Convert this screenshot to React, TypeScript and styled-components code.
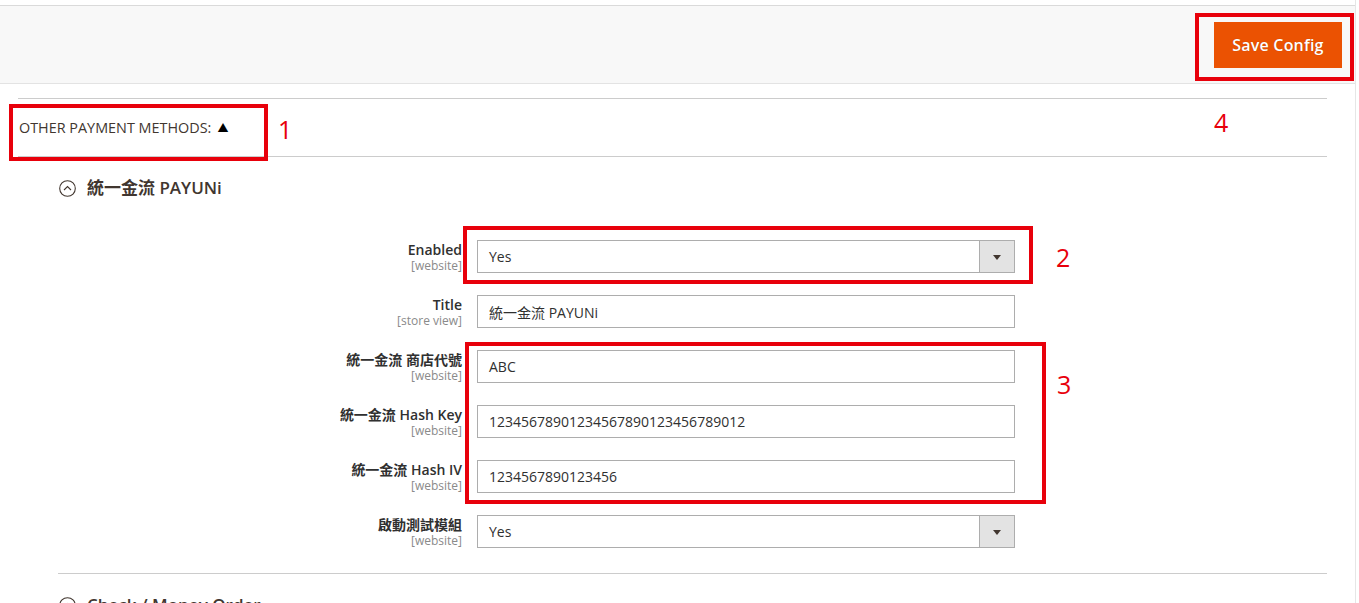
import React from "react";
import styled, { createGlobalStyle } from "styled-components";

const Global = createGlobalStyle`
  html, body { margin: 0; padding: 0; background: #fff; }
  body { font-family: "Open Sans", "Noto Sans CJK TC", sans-serif; color: #303030; overflow: hidden; }
  * { box-sizing: border-box; }
`;

const Page = styled.div`
  width: 1356px;
  height: 603px;
  padding-top: 5px;
  border-right: 1px solid #e6e6e6;
  overflow: hidden;
`;

const Header = styled.header`
  height: 79px;
  background: #f8f8f8;
  border-top: 1px solid #dadada;
  border-bottom: 1px solid #e3e3e3;
  display: flex;
  align-items: flex-start;
  justify-content: flex-end;
  padding: 16px 13px 0 0;
`;

const SaveButton = styled.button`
  display: block;
  width: 128px;
  height: 46px;
  background: #eb5202;
  border: 1px solid #eb5202;
  color: #fff;
  font-family: "Open Sans", sans-serif;
  font-size: 16px;
  font-weight: 600;
  letter-spacing: 0.2px;
  text-shadow: 0 0 1px rgba(0, 0, 0, 0.25);
  padding: 0;
  cursor: pointer;
`;

/* Red annotation: a box drawn over the wrapped element, plus a number beside it */
const Annot = styled.div<{ $inset: string }>`
  position: relative;
  &::after {
    content: "";
    position: absolute;
    inset: ${(p) => p.$inset};
    border: 4px solid #e8000b;
    pointer-events: none;
  }
`;

const AnnotInline = styled(Annot)`
  display: inline-flex;
  align-items: center;
  gap: 6px;
`;

const Num = styled.span<{ $x: number; $y: number }>`
  position: absolute;
  left: ${(p) => p.$x}px;
  top: ${(p) => p.$y}px;
  font-family: "Open Sans", sans-serif;
  font-size: 25px;
  line-height: 30px;
  font-weight: 400;
  text-transform: none;
  color: #e8000b;
`;

const Content = styled.main`
  padding: 14px 0 0 18px;
  width: 1327px;
`;

const Section = styled.section`
  border-top: 1px solid #cccccc;
`;

const SectionHead = styled.div`
  padding: 20px 0 19px 1px;
  font-size: 14.4px;
  line-height: 18px;
  text-transform: uppercase;
  color: #41362f;
  border-bottom: 1px solid #cccccc;
`;

const Caret = styled.span`
  font-size: 11px;
  color: #000;
  line-height: 18px;
`;

const Group = styled.div<{ $last?: boolean }>`
  margin-left: 40px;
  border-bottom: ${(p) => (p.$last ? "none" : "1px solid #cccccc")};
  padding-bottom: ${(p) => (p.$last ? "0" : "25px")};
`;

const GroupHead = styled.div`
  padding-top: 21px;
  display: flex;
  align-items: center;
  gap: 11px;
  font-size: 17px;
  font-weight: 600;
  line-height: 20px;
  color: #41362f;
  padding-left: 1px;
`;

const Form = styled.div`
  margin-top: 42px;
  display: grid;
  grid-template-columns: 404px 538px;
  column-gap: 15px;
  row-gap: 22px;
`;

const Label = styled.div`
  text-align: right;
  display: flex;
  flex-direction: column;
  align-items: flex-end;
`;

const LabelText = styled.span`
  font-size: 14px;
  font-weight: 600;
  line-height: 19px;
  color: #303030;
`;

const Scope = styled.span`
  font-size: 12px;
  line-height: 14px;
  color: #8a8a8a;
`;

const Input = styled.div`
  height: 33px;
  border: 1px solid #adadad;
  background: #fff;
  display: flex;
  align-items: center;
  font-size: 14px;
  color: #303030;
`;

const Value = styled.span`
  flex: 1;
  padding-left: 11px;
  white-space: nowrap;
`;

const ArrowBox = styled.span`
  width: 35px;
  height: 100%;
  background: #e3e3e3;
  border-left: 1px solid #adadad;
  display: flex;
  align-items: center;
  justify-content: center;
`;

const Arrow = styled.span`
  width: 0;
  height: 0;
  border-left: 4px solid transparent;
  border-right: 4px solid transparent;
  border-top: 5px solid #41362f;
  margin-top: 1px;
`;

const CircleIcon = () => (
  <svg width="17" height="17" viewBox="0 0 17 17" aria-hidden>
    <circle cx="8.5" cy="8.5" r="7.8" fill="none" stroke="#41362f" strokeWidth="1.1" />
    <path d="M5 10 L8.5 6.6 L12 10" fill="none" stroke="#41362f" strokeWidth="1.1" />
  </svg>
);

type Note = { inset: string; n: string; x: number; y: number };
type Row = { label: string; scope: string; value: string; select?: boolean; note?: Note };

const rows: Row[] = [
  {
    label: "Enabled",
    scope: "[website]",
    value: "Yes",
    select: true,
    note: { inset: "-14px -18px -11px -14px", n: "2", x: 579, y: 2 },
  },
  { label: "Title", scope: "[store view]", value: "統一金流 PAYUNi" },
  {
    label: "統一金流 商店代號",
    scope: "[website]",
    value: "ABC",
    note: { inset: "-8px -31px -121px -12px", n: "3", x: 580, y: 19 },
  },
  { label: "統一金流 Hash Key", scope: "[website]", value: "12345678901234567890123456789012" },
  { label: "統一金流 Hash IV", scope: "[website]", value: "1234567890123456" },
  { label: "啟動測試模組", scope: "[website]", value: "Yes", select: true },
];

const Field = ({ r }: { r: Row }) => {
  const input = (
    <Input>
      <Value>{r.value}</Value>
      {r.select && (
        <ArrowBox>
          <Arrow />
        </ArrowBox>
      )}
    </Input>
  );
  if (!r.note) return input;
  return (
    <Annot $inset={r.note.inset}>
      {input}
      <Num $x={r.note.x} $y={r.note.y}>{r.note.n}</Num>
    </Annot>
  );
};

export default function App() {
  return (
    <>
      <Global />
      <Page>
        <Header>
          <Annot $inset="-9px -12px -13px -19px">
            <SaveButton>Save Config</SaveButton>
            <Num $x={0} $y={85}>4</Num>
          </Annot>
        </Header>
        <Content>
          <Section>
            <SectionHead>
              <AnnotInline $inset="-15px -40px -24px -10px">
                Other Payment Methods: <Caret>▲</Caret>
                <Num $x={259} $y={-5}>1</Num>
              </AnnotInline>
            </SectionHead>
            <Group>
              <GroupHead>
                <CircleIcon />
                統一金流 PAYUNi
              </GroupHead>
              <Form>
                {rows.map((r) => (
                  <React.Fragment key={r.label}>
                    <Label>
                      <LabelText>{r.label}</LabelText>
                      <Scope>{r.scope}</Scope>
                    </Label>
                    <Field r={r} />
                  </React.Fragment>
                ))}
              </Form>
            </Group>
            <Group $last>
              <GroupHead>
                <CircleIcon />
                Check / Money Order
              </GroupHead>
            </Group>
          </Section>
        </Content>
      </Page>
    </>
  );
}
